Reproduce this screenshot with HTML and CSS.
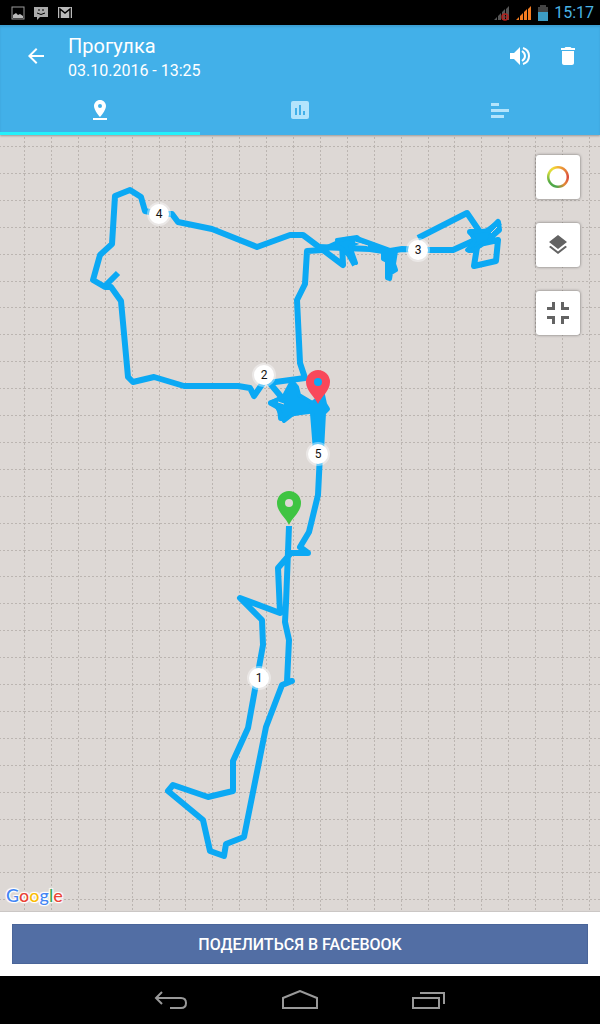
FILE: index.html
```html
<!DOCTYPE html>
<html lang="ru">
<head>
    <meta charset="UTF-8">
    <meta name="viewport" content="width=device-width, initial-scale=1.0">
    <title>Прогулка</title>
    <link rel="stylesheet" href="styles.css">
</head>

<body>
    <div class="statusbar">
        <div class="status-left">
            <svg width="14" height="14" viewBox="0 0 14 14"><rect x="1" y="1" width="12" height="12" fill="none" stroke="#999" /><path d="M2 12V9l3-2 2 2 2-1 3 2v2z" fill="#bbb"/></svg>
            <svg width="14" height="14" viewBox="0 0 14 14"><path d="M0 1h14v10H6l-3 3v-3H0z" fill="#aaa"/><path d="M4 4h2M8 4h2M3 7q4 3 8 0" fill="none" stroke="#000"/></svg>
            <svg width="16" height="14" viewBox="0 0 16 14"><rect x="1" y="1" width="14" height="11" fill="#bbb"/><path d="M3 12V3l5 4 5-4v9" fill="none" stroke="#000" stroke-width="1.500"/></svg>
        </div>
        <div class="status-right">
            <svg width="16" height="16" viewBox="0 0 16 16"><path d="M0 15l3-3v3zM4 15v-4l3-3v7zM8 15V7l3-3v11zM12 15V4l3-3v14z" fill="#555"/><circle cx="11" cy="12" r="3" fill="none" stroke="#b3201c" stroke-width="1.500"/><path d="M9 12h4" stroke="#b3201c"/></svg>
            <svg width="16" height="16" viewBox="0 0 16 16"><path d="M0 15l3-3v3zM4 15v-4l3-3v7zM8 15V7l3-3v11zM12 15V4l3-3v14z" fill="#f47c20"/></svg>
            <svg width="10" height="16" viewBox="0 0 10 16"><path d="M2 0h6v2h2v6H0V2h2z" fill="#444"/><path d="M0 7h10v9H0z" fill="#3c9cc4"/></svg>
            <span class="time">15:17</span>
        </div>
    </div>

    <header>
        <div class="toolbar">
            <button class="icon-btn" aria-label="Назад">
                <svg width="24" height="24" viewBox="0 0 24 24"><path d="M20 11H7.800l5.600-5.600L12 4l-8 8 8 8 1.400-1.400L7.800 13H20z" fill="#fff"/></svg>
            </button>
            <div class="titles">
                <h1>Прогулка</h1>
                <p>03.10.2016 - 13:25</p>
            </div>
            <button class="icon-btn" aria-label="Звук">
                <svg width="24" height="24" viewBox="0 0 24 24"><path d="M2 9v6h4l6 6V3L6 9z" fill="#fff"/><path d="M14 7q3 2 3 5t-3 5M15 4q6 2 6 8t-6 8" fill="none" stroke="#fff" stroke-width="2"/></svg>
            </button>
            <button class="icon-btn" aria-label="Удалить">
                <svg width="24" height="24" viewBox="0 0 24 24"><path d="M6 19c0 1.100.9 2 2 2h8c1.100 0 2-.9 2-2V7H6zM19 4h-3.500l-1-1h-5l-1 1H5v2h14z" fill="#fff"/></svg>
            </button>
        </div>
        <nav class="tabs">
            <a href="#map" class="tab active" aria-label="Карта">
                <svg width="24" height="24" viewBox="0 0 24 24"><path d="M18 8c0-3.300-2.700-6-6-6S6 4.700 6 8c0 4.500 6 11 6 11s6-6.500 6-11zm-8 0a2 2 0 1 1 4 0 2 2 0 0 1-4 0zM5 20v2h14v-2z" fill="#fff"/></svg>
            </a>
            <a href="#stats" class="tab" aria-label="Статистика">
                <svg width="24" height="24" viewBox="0 0 24 24"><path d="M19 3H5a2 2 0 0 0-2 2v14c0 1.100.9 2 2 2h14a2 2 0 0 0 2-2V5a2 2 0 0 0-2-2zM9 17H7v-7h2zm4 0h-2V7h2zm4 0h-2v-4h2z" fill="#b3e4fc"/></svg>
            </a>
            <a href="#details" class="tab" aria-label="Подробности">
                <svg width="24" height="24" viewBox="0 0 24 24"><path d="M3 5h8v3H3zM3 11h18v3H3zM3 17h13v3H3z" fill="#b3e4fc"/></svg>
            </a>
        </nav>
    </header>

    <main class="map" id="map">
        <svg class="map-canvas" viewBox="0 135 600 776" preserveAspectRatio="xMidYMid slice">
            <defs>
                <pattern id="grid" x="24" y="146" width="269" height="269" patternUnits="userSpaceOnUse">
                    <g stroke="#bbb5b1" stroke-width="1" stroke-dasharray="2 2" fill="none">
                        <path d="M.5 0v269M27.500 0v269M54.500 0v269M81.500 0v269M108.500 0v269M135.500 0v269M161.500 0v269M188.500 0v269M215.500 0v269M242.500 0v269"/>
                        <path d="M0 .5h269M0 27.500h269M0 54.500h269M0 81.500h269M0 108.500h269M0 135.500h269M0 161.500h269M0 188.500h269M0 215.500h269M0 242.500h269"/>
                    </g>
                </pattern>
            </defs>
            <rect x="0" y="135" width="600" height="776" fill="url(#grid)"/>

            <!-- track -->
            <g class="track">
                <path d="M289 526L286 603 285 622 289 640 287 682 292 681 282 685 266 727 244 837 226 844 224 856 210 851 203 820 168 791 173 785 208 797 233 791 233 761 248 728 263 645 262 620 240 598 280 613 278 568 291 553 308 553 300 547 309 532 318 495 320 454"/>
                <path d="M263 383L254 396 250 388 238 386H184L154 377 133 382 128 377 121 301 111 287H105L93 280 100 255 112 244 115 196 130 190 141 197 145 211 160 214 172 214 178 222 212 229 257 247 290 235H303L343 265 342 242 355 265"/>
                <path d="M105 286L118 273"/>
                <path d="M268 383L305 378 300 363 297 300 305 284 307 251 323 250 345 240 357 239 390 251 402 249 428 250H453L475 240 500 222"/>
                <path d="M318 247L370 249 390 252M418 238L467 213 480 232 470 232 478 239 469 250 485 235 498 222 499 230 484 243 498 240 496 261 474 266 477 247"/>
                <path d="M268 381L283 399 271 403 280 408 281 418 290 414 312 408"/>
            </g>
            <g class="blob">
                <path d="M337 240L357 237 361 241 350 246 356 263 344 250 338 246z"/>
                <path d="M383 251L396 251 394 264 396 270 391 273 390 279 387 278 387 261 383 259z"/>
                <path d="M470 232L492 230 490 240 472 251 467 250 475 241z"/>
                <path d="M272 402L284 396 292 381 297 387 299 395 314 404 309 412 293 414 284 421 277 407z"/>
                <path d="M312 403L323 395 325 404 328 409 324 413 322 451 315 451 312 413z"/>
            </g>
            <path d="M278 402l6 2M355 242l13 4M491 233l6-6" stroke="#ddd8d5" stroke-width="1"/>

            <!-- start and finish pins -->
            <path d="M289 525c-3-7-12-13-12-22a12 12 0 0 1 24 0c0 9-9 15-12 22z" fill="#3fc442"/>
            <circle cx="289" cy="503" r="4" fill="#ddd8d5"/>
            <path d="M318 404c-3-7-12-13-12-22a12 12 0 0 1 24 0c0 9-9 15-12 22z" fill="#f9485a"/>
            <circle cx="318" cy="382" r="4" fill="#0ba9f4"/>

            <!-- kilometre marks -->
            <g class="km">
                <circle cx="259" cy="678" r="10"/><text x="259" y="682">1</text>
                <circle cx="264" cy="375" r="10"/><text x="264" y="379">2</text>
                <circle cx="418" cy="250" r="10"/><text x="418" y="254">3</text>
                <circle cx="159" cy="214" r="10"/><text x="159" y="218">4</text>
                <circle cx="318" cy="454" r="10"/><text x="318" y="458">5</text>
            </g>
        </svg>

        <div class="map-buttons">
            <button aria-label="Цвет трека">
                <span class="ring"></span>
            </button>
            <button aria-label="Слои">
                <svg width="24" height="24" viewBox="0 0 24 24"><path d="M12 18.500l-7.400-5.700L3 14l9 7 9-7-1.600-1.300zM12 16l9-7-9-7-9 7z" fill="#636363"/></svg>
            </button>
            <button aria-label="Свернуть карту">
                <svg width="24" height="24" viewBox="0 0 24 24"><path d="M1 6h5V1h3v8H1zM15 1h3v5h5v3h-8zM1 15h8v8H6v-5H1zM15 15h8v3h-5v5h-3z" fill="#636363"/></svg>
            </button>
        </div>

        <div class="google" aria-label="Google"><span class="b">G</span><span class="r">o</span><span class="y">o</span><span class="b">g</span><span class="g">l</span><span class="r">e</span></div>
    </main>

    <div class="share">
        <button>ПОДЕЛИТЬСЯ В FACEBOOK</button>
    </div>

    <div class="navbar">
        <button aria-label="Назад">
            <svg width="34" height="20" viewBox="0 0 34 20"><path d="M8 2L2 8l6 6M2 8h25q5 0 5 5t-5 5H16" fill="none" stroke="#999" stroke-width="2"/></svg>
        </button>
        <button aria-label="Домой">
            <svg width="38" height="20" viewBox="0 0 38 20"><path d="M2 18V8l17-7 17 7v10z" fill="none" stroke="#999" stroke-width="2"/></svg>
        </button>
        <button aria-label="Недавние">
            <svg width="34" height="20" viewBox="0 0 34 20"><path d="M1 8h26v10H1zM8 3h24v11" fill="none" stroke="#999" stroke-width="2"/></svg>
        </button>
    </div>
</body>
</html>
```
FILE: styles.css
```css
* {
    box-sizing: border-box;
}
body {
    margin: 0;
    min-height: 100vh;
    display: flex;
    flex-direction: column;
    font-family: Roboto, sans-serif;
    background-color: #fff;
}
button {
    padding: 0;
    border: none;
    background: none;
    font-family: inherit;
    cursor: pointer;
}
svg {
    display: block;
}

/* status bar */
.statusbar {
    height: 25px;
    padding: 0 6px 0 11px;
    display: flex;
    align-items: center;
    justify-content: space-between;
    background-color: #000;
}
.status-left {
    display: flex;
    gap: 9px;
}
.status-right {
    display: flex;
    align-items: center;
    gap: 6px;
}
.time {
    font-size: 16px;
    line-height: 24px;
    color: #4ab3e4;
}

/* header */
header {
    background-color: #42b0e9;
    box-shadow: 0 1px 2px rgba(0, 0, 0, 0.3), inset 0 2px 2px rgba(0, 0, 0, 0.1);
    color: #fff;
    z-index: 1;
}
.toolbar {
    height: 62px;
    padding: 0 8px 0 12px;
    display: flex;
    align-items: center;
}
.icon-btn {
    width: 48px;
    height: 48px;
    display: flex;
    align-items: center;
    justify-content: center;
}
.titles {
    flex: 1;
    padding: 3px 0 0 8px;
}
.titles h1 {
    margin: 0;
    font-size: 20px;
    line-height: 25px;
    font-weight: 400;
}
.titles p {
    margin: 0;
    font-size: 16px;
    line-height: 23px;
}
.tabs {
    height: 48px;
    display: flex;
}
.tab {
    flex: 1;
    display: flex;
    align-items: center;
    justify-content: center;
    padding-top: 1px;
    border-bottom: 3px solid transparent;
}
.tab.active {
    border-bottom-color: #24f0fb;
}

/* map */
.map {
    flex: 1;
    position: relative;
    min-height: 400px;
    background-color: #ddd8d5;
    box-shadow: 0 1px 0 #cbc7c5;
}
.map-canvas {
    position: absolute;
    width: 100%;
    height: 100%;
}
.track {
    fill: none;
    stroke: #0ba9f4;
    stroke-width: 6;
    stroke-linejoin: round;
}
.blob {
    fill: #0ba9f4;
    stroke: #0ba9f4;
    stroke-width: 4;
    stroke-linejoin: round;
}
.km circle {
    fill: #fff;
    stroke: rgba(255, 255, 255, 0.4);
    stroke-width: 4;
}
.km text {
    font-size: 12px;
    text-anchor: middle;
    fill: #111;
}
.map-buttons {
    position: absolute;
    top: 20px;
    right: 20px;
    display: flex;
    flex-direction: column;
    gap: 24px;
}
.map-buttons button {
    width: 44px;
    height: 44px;
    display: flex;
    align-items: center;
    justify-content: center;
    background-color: #fff;
    border-radius: 3px;
    box-shadow: 0 0 3px rgba(0, 0, 0, 0.5);
}
.ring {
    width: 22px;
    height: 22px;
    border-radius: 50%;
    background: radial-gradient(circle, #fff 8px, transparent 9px),
        conic-gradient(#f2b134, #e0703a 60deg, #dc4b3e 90deg, #e58a35 140deg, #4ca64c 190deg, #55ab44 240deg, #d4dc3c 300deg, #f2d934 330deg, #f2b134);
}
.google {
    position: absolute;
    left: 6px;
    bottom: 4px;
    font-family: Lato, sans-serif;
    font-size: 18px;
    line-height: 24px;
    font-weight: 500;
    text-shadow: 0 0 2px #fff, 1px 1px 1px #fff, -1px -1px 1px #fff, 1px -1px 1px #fff, -1px 1px 1px #fff;
}
.google .b { color: #4285f4; }
.google .r { color: #ea4335; }
.google .y { color: #fbbc05; }
.google .g { color: #34a853; }

/* share */
.share {
    padding: 13px 12px 12px;
}
.share button {
    display: block;
    width: 100%;
    height: 40px;
    background-color: #526ea4;
    border: 1px solid #4a6599;
    color: #fff;
    font-size: 16px;
    font-weight: 500;
}

/* system buttons */
.navbar {
    height: 48px;
    display: flex;
    justify-content: center;
    gap: 66px;
    background-color: #000;
}
.navbar button {
    width: 63px;
    display: flex;
    align-items: center;
    justify-content: center;
}
```
